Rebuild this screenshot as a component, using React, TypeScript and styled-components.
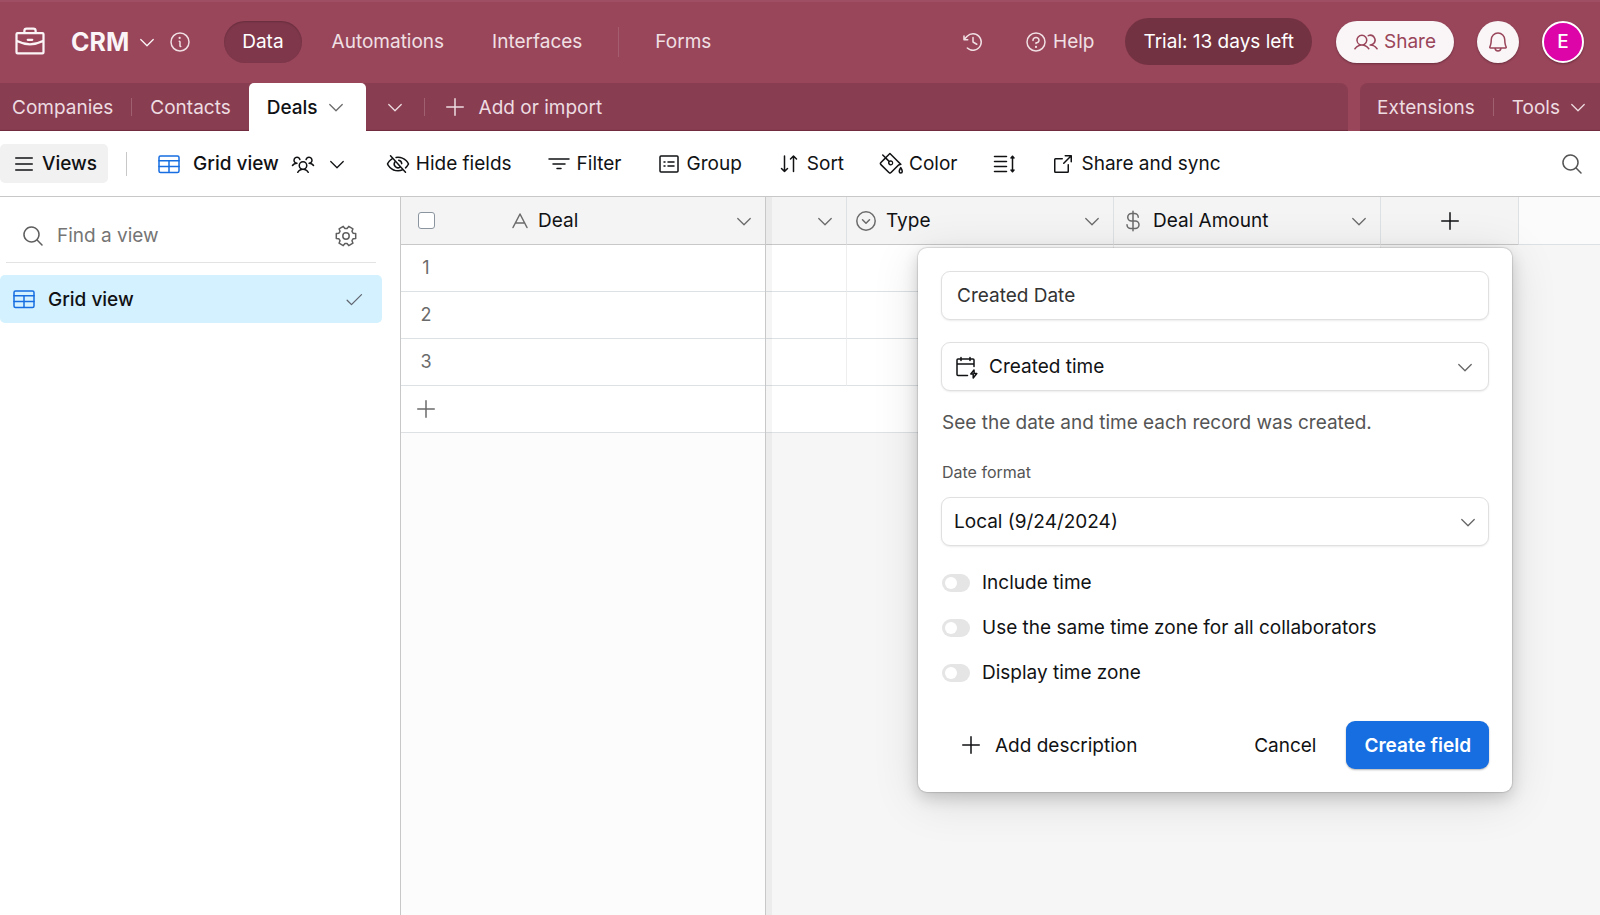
import React from "react";
import styled, { createGlobalStyle, css } from "styled-components";
import {
  PiArrowSquareOut,
  PiBell,
  PiBriefcase,
  PiCaretDown,
  PiCheck,
  PiClockCounterClockwise,
  PiCurrencyDollar,
  PiEyeSlash,
  PiInfo,
  PiList,
  PiMagnifyingGlass,
  PiPaintBucket,
  PiPlus,
  PiQuestion,
  PiUsers,
  PiUsersThree,
} from "react-icons/pi";

const GlobalStyle = createGlobalStyle`
  *, *::before, *::after { box-sizing: border-box; }
  body {
    margin: 0;
    font-family: Inter, "Liberation Sans", sans-serif;
    font-size: 19px;
    line-height: 25px;
    color: #111214;
    background: #fff;
  }
  button, input, select {
    font: inherit;
    color: inherit;
    border: 0;
    background: none;
    padding: 0;
    margin: 0;
  }
  button { cursor: pointer; white-space: nowrap; }
  a { color: inherit; text-decoration: none; }
  svg { display: block; flex: none; }
`;

/* ---------- icons ---------- */

const Stroke = styled.svg.attrs({ width: 24, height: 24, viewBox: "0 0 24 24" })`
  fill: none;
  stroke: currentColor;
  stroke-width: 1.5;
  stroke-linecap: round;
  stroke-linejoin: round;
`;

const GridIcon = () => (
  <Stroke>
    <rect x="2" y="4" width="20" height="16.500" rx="1.5" />
    <path d="M2 8.800h20M2 14.500h20M12 8.800v11.500" />
  </Stroke>
);

const FilterIcon = () => (
  <Stroke>
    <path d="M2 7h20M6 12h12M10 16.5h4" />
  </Stroke>
);

const GroupIcon = () => (
  <Stroke>
    <rect x="3" y="4" width="18" height="16" rx="1" />
    <path d="M11 10h6M11 14h6M7 10h1M7 14h1" />
  </Stroke>
);

const SortIcon = () => (
  <Stroke>
    <path d="M7.500 4v15.500M4.500 16.500l3 3 3-3M16.500 19.500V4M13.500 7l3-3 3 3" />
  </Stroke>
);

const RowHeightIcon = () => (
  <Stroke>
    <path d="M2.500 4.500h12M2.500 9.500h12M2.500 14.500h12M2.500 19.500h12M20.500 4.500v15M19 6l1.500-1.800L22 6M19 18l1.500 1.800L22 18" />
  </Stroke>
);

const TextFieldIcon = () => (
  <Stroke>
    <path d="M5 18.500L12 5l7 13.500M7.300 14h9.400" />
  </Stroke>
);

const SelectFieldIcon = () => (
  <Stroke>
    <circle cx="12" cy="12" r="9.200" />
    <path d="M8.500 10.800l3.500 3.500 3.500-3.500" />
  </Stroke>
);

const CreatedTimeIcon = () => (
  <Stroke>
    <path d="M13.500 20.500H4A1 1 0 0 1 3 19.500V5a1 1 0 0 1 1-1h15a1 1 0 0 1 1 1v6.500M3 9h17M7 2.500V5.500M16 2.500V5.500" />
    <path d="M20 15l-3.200 4h2.400v4l3.600-4.500h-2.600z" />
  </Stroke>
);

/* Six teeth, the first one pointing right, so that a notch sits at the top. */
const gearPath =
  "M" +
  [0, 60, 120, 180, 240, 300]
    .flatMap((tooth) =>
      [
        [-22, 7.6],
        [-14, 10],
        [14, 10],
        [22, 7.6],
      ].map(([offset, radius]) => {
        const a = ((tooth + offset) * Math.PI) / 180;
        return `${(12 + radius * Math.cos(a)).toFixed(2)} ${(12 + radius * Math.sin(a)).toFixed(2)}`;
      }),
    )
    .join("L") +
  "Z";

const GearIcon = () => (
  <Stroke>
    <path d={gearPath} />
    <circle cx="12" cy="12" r="3.200" />
  </Stroke>
);

/* ---------- top bar ---------- */

const Page = styled.div`
  display: flex;
  flex-direction: column;
  min-height: 100vh;
`;

const TopBar = styled.header`
  display: flex;
  align-items: center;
  justify-content: space-between;
  height: 83px;
  padding: 0 16px 0 12px;
  background: #99455a;
  box-shadow: inset 0 2px 0 #9f4f63;
  color: #f0e0e4;
`;

const Cluster = styled.div<{ $gap?: number }>`
  display: flex;
  align-items: center;
  gap: ${(p) => p.$gap ?? 0}px;
`;

const BaseButton = styled.button`
  display: flex;
  align-items: center;
  gap: 8px;
  margin: 0 11px 0 23px;
  color: #fbf5f7;
`;

const BaseName = styled.h1`
  margin: 0;
  font-size: 25px;
  line-height: 32px;
  font-weight: 700;
`;

const IconButton = styled.button`
  display: flex;
  align-items: center;
  justify-content: center;
`;

const Nav = styled.nav`
  display: flex;
  align-items: center;
  margin-left: 32px;
`;

const NavLink = styled.a<{ $active?: boolean }>`
  padding: 8px 18px;
  margin-right: 12px;
  line-height: 26px;
  border-radius: 21px;
  ${(p) =>
    p.$active &&
    css`
      color: #fff;
      background: #7f384b;
      box-shadow: inset 0 1px 2px rgba(0, 0, 0, 0.2);
    `}
`;

const FormsNav = styled.div`
  display: flex;
  align-items: center;
  gap: 18px;
  margin-left: 6px;
`;

const Divider = styled.span<{ $h: number; $c: string }>`
  width: 1px;
  height: ${(p) => p.$h}px;
  background: ${(p) => p.$c};
`;

const HelpButton = styled.button`
  display: flex;
  align-items: center;
  gap: 5px;
  margin: 0 31px 0 39px;
`;

const TrialButton = styled.button`
  height: 47px;
  padding: 0 18px;
  border-radius: 24px;
  background: #733241;
  color: #fff;
`;

const ShareButton = styled.button`
  display: flex;
  align-items: center;
  gap: 6px;
  height: 42px;
  padding: 0 18px;
  margin: 0 23px 0 24px;
  border-radius: 21px;
  background: #faf5f7;
  color: #99455a;
  box-shadow: 0 1px 2px rgba(0, 0, 0, 0.3);
`;

const RoundButton = styled.button<{ $avatar?: boolean }>`
  display: flex;
  align-items: center;
  justify-content: center;
  width: 42px;
  height: 42px;
  border-radius: 50%;
  background: ${(p) => (p.$avatar ? "#dd04a8" : "#faf5f7")};
  border: ${(p) => (p.$avatar ? "2px solid #fff" : "0")};
  color: ${(p) => (p.$avatar ? "#fff" : "#99455a")};
  font-weight: ${(p) => (p.$avatar ? 500 : 400)};
  box-shadow: 0 1px 2px rgba(0, 0, 0, 0.3);
`;

/* ---------- table tabs ---------- */

const TabStrip = styled.div`
  display: flex;
  gap: 12px;
  height: 48px;
  background: #99455a;
  color: #eddce1;
`;

const TabPanel = styled.div<{ $side: "left" | "right" }>`
  display: flex;
  align-items: center;
  background: #893d50;
  box-shadow: inset 0 -2px 1px -1px #6f2c3e;
  ${(p) =>
    p.$side === "left"
      ? css`
          flex: 1;
          padding-left: 12px;
          border-top-right-radius: 8px;
        `
      : css`
          gap: 18px;
          padding: 0 12px 0 17px;
          border-top-left-radius: 8px;
        `}
`;

const Tab = styled.a`
  padding: 0 18px;
  &:first-child {
    padding-left: 0;
  }
`;

const ActiveTab = styled.button`
  display: flex;
  align-items: center;
  gap: 8px;
  height: 48px;
  padding: 0 20px 0 18px;
  background: #fff;
  color: #111214;
  font-weight: 500;
  border-radius: 5px 5px 0 0;
  svg {
    color: #6b6b6b;
  }
`;

const TabAction = styled.button<{ $px: number; $gap?: number }>`
  display: flex;
  align-items: center;
  gap: ${(p) => p.$gap ?? 12}px;
  padding: 0 ${(p) => p.$px}px;
`;

/* ---------- view toolbar ---------- */

const ViewBar = styled.div`
  display: flex;
  align-items: center;
  height: 66px;
  padding-right: 16px;
  border-bottom: 1px solid #c8c8c8;
`;

const ViewsButton = styled.button`
  display: flex;
  align-items: center;
  gap: 6px;
  height: 39px;
  padding: 0 11px 0 12px;
  border-radius: 5px;
  background: #f1f1f1;
  font-weight: 500;
`;

const ViewName = styled.button`
  display: flex;
  align-items: center;
  gap: 12px;
  margin: 0 39px 0 30px;
  font-weight: 500;
  svg:first-child {
    color: #166ee1;
  }
`;

const Tools = styled.div`
  display: flex;
  flex: 1;
  align-items: center;
  gap: 35px;
`;

const ToolButton = styled.button`
  display: flex;
  align-items: center;
  gap: 6px;
`;

/* ---------- sidebar ---------- */

const Body = styled.div`
  display: flex;
  flex: 1;
`;

const Sidebar = styled.aside`
  width: 401px;
  flex: none;
  border-right: 1px solid #c8c8c8;
`;

const SearchRow = styled.div`
  display: flex;
  align-items: center;
  gap: 12px;
  height: 66px;
  margin: 0 24px 12px 6px;
  padding: 12px 18px 0 15px;
  border-bottom: 1px solid #e3e3e3;
  color: #5f5f5f;
  input {
    flex: 1;
    min-width: 0;
    outline: 0;
  }
  input::placeholder {
    color: #757575;
    opacity: 1;
  }
`;

const ViewItem = styled.button`
  display: flex;
  align-items: center;
  gap: 12px;
  width: 382px;
  height: 48px;
  padding: 0 18px 0 12px;
  border-radius: 5px;
  background: #d4f1ff;
  font-weight: 500;
  text-align: left;
  svg:first-child {
    color: #166ee1;
  }
  svg:last-child {
    color: #616670;
  }
  span {
    flex: 1;
  }
`;

/* ---------- grid ---------- */

const FrozenPane = styled.section`
  position: relative;
  z-index: 1;
  width: 365px;
  flex: none;
  background: #fcfcfc;
  border-right: 1px solid #c8c8c8;
  box-shadow: 6px 0 0 rgba(0, 0, 0, 0.04);
`;

const ScrollPane = styled.section`
  position: relative;
  flex: 1;
  min-width: 0;
  background: #f6f6f6;
`;

const Table = styled.table`
  width: 100%;
  table-layout: fixed;
  border-collapse: separate;
  border-spacing: 0;
`;

const HeadCell = styled.th<{ $blank?: boolean; $edge?: boolean }>`
  height: 48px;
  padding: 0;
  font-weight: 400;
  text-align: left;
  background: ${(p) => (p.$blank ? "#fbfbfb" : "#f4f4f4")};
  border-bottom: 1px solid ${(p) => (p.$blank ? "#dde1e3" : "#c8c8c8")};
  border-right: ${(p) => (p.$edge ? "1px solid #dde1e3" : "0")};
`;

const HeadContent = styled.div<{ $pad: number; $gap?: number }>`
  display: flex;
  align-items: center;
  gap: ${(p) => p.$gap ?? 8}px;
  padding: 0 11px 0 ${(p) => p.$pad}px;
  svg {
    color: #6b6b6b;
  }
  span {
    flex: 1;
  }
`;

const PlusButton = styled.button`
  display: flex;
  align-items: center;
  justify-content: center;
  width: 100%;
`;

const Cell = styled.td<{ $edge?: boolean; $empty?: boolean }>`
  height: 47px;
  padding: 0;
  background: ${(p) => (p.$empty ? "transparent" : "#fff")};
  border-bottom: ${(p) => (p.$empty ? "0" : "1px solid #dde1e3")};
  border-right: ${(p) => (p.$edge ? "1px solid #eeeeee" : "0")};
  color: #6b6b6b;
  font-size: 18px;
  line-height: 26px;
  text-align: center;
`;

const CheckBox = styled.input`
  display: block;
  appearance: none;
  width: 17px;
  height: 17px;
  margin: 0 auto;
  border: 1px solid #8b959f;
  border-radius: 3px;
  background: #fff;
`;

/* ---------- field editor ---------- */

const Popover = styled.form`
  position: absolute;
  top: 51px;
  left: 152px;
  width: 594px;
  padding: 23px;
  border-radius: 9px;
  background: #fff;
  box-shadow: 0 0 1px 1px rgba(0, 0, 0, 0.12), 0 6px 16px rgba(0, 0, 0, 0.16),
    0 8px 48px rgba(0, 0, 0, 0.12);
`;

const fieldBox = css`
  display: block;
  width: 100%;
  height: 49px;
  border: 1px solid #e0e0e0;
  border-radius: 9px;
  background: #fff;
  box-shadow: 0 1px 2px rgba(0, 0, 0, 0.08);
`;

const TextInput = styled.input`
  ${fieldBox}
  padding: 0 15px;
  margin-bottom: 22px;
  color: #333;
`;

const SelectWrap = styled.div`
  position: relative;
`;

const Select = styled.select<{ $pad: number }>`
  ${fieldBox}
  appearance: none;
  padding: 0 48px 0 ${(p) => p.$pad}px;
`;

const SelectGlyph = styled.span<{ $side: "left" | "right"; $inset: number }>`
  position: absolute;
  top: 0;
  bottom: 0;
  ${(p) => p.$side}: ${(p) => p.$inset}px;
  display: flex;
  align-items: center;
  color: ${(p) => (p.$side === "left" ? "#111214" : "#666")};
  pointer-events: none;
`;

const Hint = styled.p`
  margin: 19px 0 24px;
  padding-left: 1px;
  line-height: 26px;
  color: #555;
`;

const FieldLabel = styled.label`
  display: block;
  padding: 0 0 13px 1px;
  font-size: 16px;
  line-height: 24px;
  color: #555;
`;

const Toggles = styled.div`
  display: flex;
  flex-direction: column;
  gap: 19px;
  padding: 24px 0 35px 1px;
`;

const Toggle = styled.label`
  display: flex;
  align-items: center;
  gap: 12px;
  line-height: 26px;
  input {
    appearance: none;
    width: 28px;
    height: 18px;
    padding: 3px;
    border-radius: 9px;
    background: #e5e5e5;
  }
  input::before {
    content: "";
    display: block;
    width: 12px;
    height: 12px;
    border-radius: 50%;
    background: #fff;
  }
`;

const Actions = styled.div`
  display: flex;
  align-items: center;
  justify-content: space-between;
  padding-left: 18px;
`;

const PlainButton = styled.button`
  display: flex;
  align-items: center;
  gap: 12px;
`;

const PrimaryButton = styled.button`
  height: 48px;
  padding: 0 18px;
  border-radius: 9px;
  background: #166ee1;
  color: #fff;
  font-weight: 600;
  box-shadow: 0 1px 2px rgba(0, 0, 0, 0.3);
`;

const toggles = ["Include time", "Use the same time zone for all collaborators", "Display time zone"];
const rows = [1, 2, 3];

function Header() {
  return (
    <TopBar>
      <Cluster>
        <PiBriefcase size={36} color="#fbf5f7" />
        <BaseButton>
          <BaseName>CRM</BaseName>
          <PiCaretDown size={20} />
        </BaseButton>
        <IconButton aria-label="Base info">
          <PiInfo size={24} />
        </IconButton>
        <Nav>
          <NavLink href="#data" $active>
            Data
          </NavLink>
          <NavLink href="#automations">Automations</NavLink>
          <NavLink href="#interfaces">Interfaces</NavLink>
          <FormsNav>
            <Divider $h={30} $c="#a55c6e" />
            <NavLink href="#forms">Forms</NavLink>
          </FormsNav>
        </Nav>
      </Cluster>
      <Cluster>
        <IconButton aria-label="History">
          <PiClockCounterClockwise size={24} />
        </IconButton>
        <HelpButton>
          <PiQuestion size={24} />
          Help
        </HelpButton>
        <TrialButton>Trial: 13 days left</TrialButton>
        <ShareButton>
          <PiUsers size={24} />
          Share
        </ShareButton>
        <Cluster $gap={23}>
          <RoundButton aria-label="Notifications">
            <PiBell size={24} />
          </RoundButton>
          <RoundButton $avatar>E</RoundButton>
        </Cluster>
      </Cluster>
    </TopBar>
  );
}

function TableTabs() {
  return (
    <TabStrip>
      <TabPanel $side="left">
        <Tab href="#companies">Companies</Tab>
        <Divider $h={18} $c="#a0606f" />
        <Tab href="#contacts">Contacts</Tab>
        <ActiveTab>
          Deals
          <PiCaretDown size={20} />
        </ActiveTab>
        <TabAction $px={19} aria-label="All tables">
          <PiCaretDown size={20} />
        </TabAction>
        <Divider $h={18} $c="#a0606f" />
        <TabAction $px={18}>
          <PiPlus size={24} />
          Add or import
        </TabAction>
      </TabPanel>
      <TabPanel $side="right">
        <TabAction $px={0}>Extensions</TabAction>
        <Divider $h={18} $c="#a0606f" />
        <TabAction $px={0} $gap={8}>
          Tools
          <PiCaretDown size={20} />
        </TabAction>
      </TabPanel>
    </TabStrip>
  );
}

function Toolbar() {
  return (
    <ViewBar>
      <Cluster $gap={18}>
        <ViewsButton>
          <PiList size={24} />
          Views
        </ViewsButton>
        <Divider $h={24} $c="#c8c8c8" />
      </Cluster>
      <ViewName>
        <GridIcon />
        Grid view
        <PiUsersThree size={24} />
        <PiCaretDown size={20} />
      </ViewName>
      <Tools>
        <ToolButton>
          <PiEyeSlash size={24} />
          Hide fields
        </ToolButton>
        <ToolButton>
          <FilterIcon />
          Filter
        </ToolButton>
        <ToolButton>
          <GroupIcon />
          Group
        </ToolButton>
        <ToolButton>
          <SortIcon />
          Sort
        </ToolButton>
        <ToolButton>
          <PiPaintBucket size={24} />
          Color
        </ToolButton>
        <ToolButton aria-label="Row height">
          <RowHeightIcon />
        </ToolButton>
        <ToolButton>
          <PiArrowSquareOut size={24} />
          Share and sync
        </ToolButton>
      </Tools>
      <IconButton aria-label="Search">
        <PiMagnifyingGlass size={24} color="#555" />
      </IconButton>
    </ViewBar>
  );
}

function FieldEditor() {
  return (
    <Popover>
      <TextInput aria-label="Field name" defaultValue="Created Date" />
      <SelectWrap>
        <SelectGlyph $side="left" $inset={13}>
          <CreatedTimeIcon />
        </SelectGlyph>
        <Select aria-label="Field type" $pad={47}>
          <option>Created time</option>
        </Select>
        <SelectGlyph $side="right" $inset={14}>
          <PiCaretDown size={20} />
        </SelectGlyph>
      </SelectWrap>
      <Hint>See the date and time each record was created.</Hint>
      <FieldLabel htmlFor="date-format">Date format</FieldLabel>
      <SelectWrap>
        <Select id="date-format" $pad={12}>
          <option>Local (9/24/2024)</option>
        </Select>
        <SelectGlyph $side="right" $inset={11}>
          <PiCaretDown size={20} />
        </SelectGlyph>
      </SelectWrap>
      <Toggles>
        {toggles.map((label) => (
          <Toggle key={label}>
            <input type="checkbox" role="switch" />
            {label}
          </Toggle>
        ))}
      </Toggles>
      <Actions>
        <PlainButton type="button">
          <PiPlus size={24} />
          Add description
        </PlainButton>
        <Cluster $gap={30}>
          <PlainButton type="button">Cancel</PlainButton>
          <PrimaryButton type="button">Create field</PrimaryButton>
        </Cluster>
      </Actions>
    </Popover>
  );
}

export default function App() {
  return (
    <Page>
      <GlobalStyle />
      <Header />
      <TableTabs />
      <Toolbar />
      <Body>
        <Sidebar>
          <SearchRow>
            <PiMagnifyingGlass size={24} />
            <input type="text" aria-label="Find a view" placeholder="Find a view" />
            <IconButton aria-label="View settings">
              <GearIcon />
            </IconButton>
          </SearchRow>
          <ViewItem>
            <GridIcon />
            <span>Grid view</span>
            <PiCheck size={20} />
          </ViewItem>
        </Sidebar>
        <FrozenPane>
          <Table>
            <colgroup>
              <col width={50} />
              <col />
            </colgroup>
            <thead>
              <tr>
                <HeadCell>
                  <CheckBox type="checkbox" aria-label="Select all rows" />
                </HeadCell>
                <HeadCell>
                  <HeadContent $pad={57} $gap={6}>
                    <TextFieldIcon />
                    <span>Deal</span>
                    <PiCaretDown size={20} />
                  </HeadContent>
                </HeadCell>
              </tr>
            </thead>
            <tbody>
              {rows.map((n) => (
                <tr key={n}>
                  <Cell>{n}</Cell>
                  <Cell />
                </tr>
              ))}
              <tr>
                <Cell>
                  <PlusButton aria-label="Add row">
                    <PiPlus size={24} />
                  </PlusButton>
                </Cell>
                <Cell />
              </tr>
            </tbody>
          </Table>
        </FrozenPane>
        <ScrollPane>
          <Table>
            <colgroup>
              <col width={81} />
              <col width={267} />
              <col width={267} />
              <col width={138} />
              <col />
            </colgroup>
            <thead>
              <tr>
                <HeadCell $edge>
                  <HeadContent $pad={10}>
                    <span />
                    <PiCaretDown size={20} />
                  </HeadContent>
                </HeadCell>
                <HeadCell $edge>
                  <HeadContent $pad={7}>
                    <SelectFieldIcon />
                    <span>Type</span>
                    <PiCaretDown size={20} />
                  </HeadContent>
                </HeadCell>
                <HeadCell $edge>
                  <HeadContent $pad={7}>
                    <PiCurrencyDollar size={24} />
                    <span>Deal Amount</span>
                    <PiCaretDown size={20} />
                  </HeadContent>
                </HeadCell>
                <HeadCell $edge>
                  <PlusButton aria-label="Add field">
                    <PiPlus size={24} />
                  </PlusButton>
                </HeadCell>
                <HeadCell $blank />
              </tr>
            </thead>
            <tbody>
              {rows.map((n) => (
                <tr key={n}>
                  <Cell $edge />
                  <Cell $edge />
                  <Cell $edge />
                  <Cell $empty />
                  <Cell $empty />
                </tr>
              ))}
              <tr>
                <Cell colSpan={3} />
                <Cell $empty colSpan={2} />
              </tr>
            </tbody>
          </Table>
          <FieldEditor />
        </ScrollPane>
      </Body>
    </Page>
  );
}
